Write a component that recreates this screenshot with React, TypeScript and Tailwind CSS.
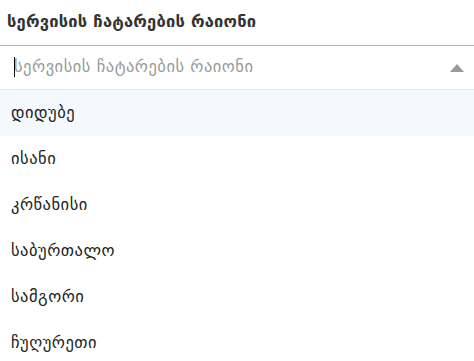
const options = ['დიდუბე', 'ისანი', 'კრწანისი', 'საბურთალო', 'სამგორი', 'ჩუღურეთი'];

const App = () => {
  return (
    <div className="w-[474px] h-[361px] overflow-hidden bg-white text-[16.5px] tracking-[0.5px] text-[#222] font-['DejaVu_Sans',sans-serif]">
      <div className="h-[45px] flex items-center px-[7px] text-[16.5px] tracking-[0.2px] font-bold text-[#333]">
        სერვისის ჩატარების რაიონი
      </div>
      <div className="h-[45px] flex items-center justify-between border-t border-[#b5b5b5] border-b border-b-[#e6e6e6] pl-[14px] pr-[8px]">
        <span className="relative text-[#999]">
          <span className="absolute left-0 top-[2px] h-[20px] w-px bg-black" />
          სერვისის ჩატარების რაიონი
        </span>
        <svg width="14" height="8" viewBox="0 0 14 8" className="mr-[2px]">
          <path d="M7 0 L14 8 L0 8 Z" fill="#999" />
        </svg>
      </div>
      <ul>
        {options.map((o, i) => (
          <li
            key={o}
            className={`h-[46px] flex items-center px-[11px] ${i === 0 ? 'bg-[#f4f9fe]' : ''}`}
          >
            {o}
          </li>
        ))}
      </ul>
    </div>
  );
};

export default App;
